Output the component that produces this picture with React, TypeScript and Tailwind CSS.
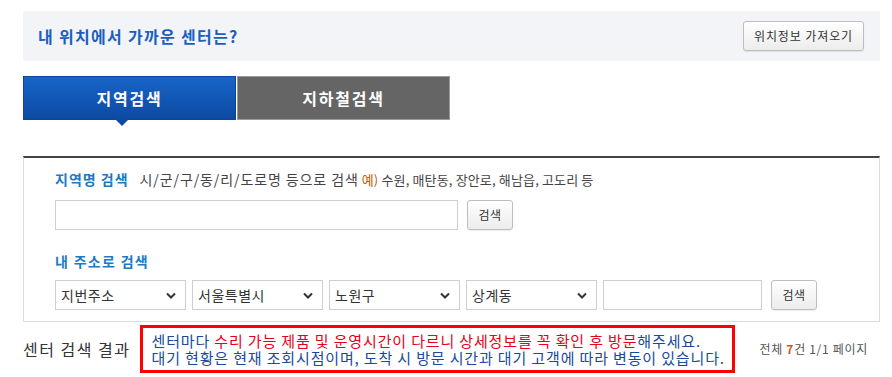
import React from "react";

function Chevron() {
  return (
    <svg width="10" height="7" viewBox="0 0 10 7" className="shrink-0">
      <polyline points="1,1.5 5,5.5 9,1.5" fill="none" stroke="#333" strokeWidth="2" />
    </svg>
  );
}

function FakeSelect({ label }: { label: string }) {
  return (
    <div className="flex h-[30px] w-[131px] items-center justify-between border border-[#cfcfcf] bg-white pl-[5px] pr-[9px] text-[14px] leading-[20px] tracking-[0.5px] text-[#333]">
      <span>{label}</span>
      <Chevron />
    </div>
  );
}

function GrayButton({ children, className }: { children: React.ReactNode; className?: string }) {
  return (
    <button
      className={
        "flex h-[30px] items-center justify-center rounded-[3px] border border-[#bdbdbd] bg-gradient-to-b from-white to-[#ececec] text-[12px] leading-[16px] text-[#333] shadow-[0_1px_1px_rgba(0,0,0,0.08)] " +
        (className ?? "")
      }
    >
      {children}
    </button>
  );
}

export default function App() {
  return (
    <div className="h-[377px] w-[892px] overflow-hidden bg-white pl-[23px] pr-[12px] font-['Noto_Sans_CJK_KR','Noto_Sans',sans-serif] text-[#333]">
      {/* top location box */}
      <div className="mt-[11px] flex h-[50px] items-center justify-between bg-[#f3f4f8] pl-[15px] pr-[16px]">
        <span className="text-[16px] font-bold leading-[22px] tracking-[1.3px] text-[#1a5fbf]">내 위치에서 가까운 센터는?</span>
        <GrayButton className="w-[121px] tracking-[0.9px]">위치정보 가져오기</GrayButton>
      </div>

      {/* tabs */}
      <div className="mt-[15px] flex h-[44px]">
        <div className="relative flex w-[213px] items-center justify-center border border-[#0b4699] bg-gradient-to-b from-[#1765c9] to-[#0d4aa2] text-[16px] font-bold leading-[22px] tracking-[1.8px] text-white">
          지역검색
          <div className="absolute left-[91px] top-full h-0 w-0 border-l-[7px] border-r-[7px] border-t-[7px] border-l-transparent border-r-transparent border-t-[#0d4aa2]" />
        </div>
        <div className="ml-px flex w-[213px] items-center justify-center border border-[#9a9a9a] bg-[#656565] text-[16px] font-bold leading-[22px] tracking-[1.8px] text-white">
          지하철검색
        </div>
      </div>

      {/* search panel */}
      <div className="mt-[36px] border-x border-b border-t-2 border-x-[#dcdcdc] border-b-[#dcdcdc] border-t-[#444] pb-[11px] pl-[31px] pt-[11px]">
        <div className="flex items-baseline leading-[20px]">
          <span className="text-[14px] font-bold tracking-[1px] text-[#1b7ac6]">지역명 검색</span>
          <span className="ml-[11px] text-[14px] tracking-[0.9px] text-[#444]">시/군/구/동/리/도로명 등으로 검색</span>
          <span className="ml-[3px] text-[13px] tracking-[0.15px] text-[#444]">
            <span className="text-[#b85c00]">예)</span> 수원, 매탄동, 장안로, 해남읍, 고도리 등
          </span>
        </div>
        <div className="mt-[10px] flex items-center">
          <input className="h-[30px] w-[403px] border border-[#cfcfcf] bg-white outline-none" />
          <GrayButton className="ml-[9px] w-[46px] tracking-[0.5px]">검색</GrayButton>
        </div>
        <div className="mt-[21px] text-[14px] font-bold leading-[20px] tracking-[1.3px] text-[#1b7ac6]">내 주소로 검색</div>
        <div className="mt-[9px] flex items-center gap-[6px]">
          <FakeSelect label="지번주소" />
          <FakeSelect label="서울특별시" />
          <FakeSelect label="노원구" />
          <FakeSelect label="상계동" />
          <input className="h-[30px] w-[159px] border border-[#cfcfcf] bg-white outline-none" />
          <GrayButton className="ml-[3px] w-[46px] tracking-[0.5px]">검색</GrayButton>
        </div>
      </div>

      {/* result row */}
      <div className="mt-[3px] flex items-center pr-[12px]">
        <span className="text-[16px] leading-[22px] tracking-[1.5px] text-[#333]">센터 검색 결과</span>
        <div className="ml-[9px] border-[3px] border-[#ff0000] py-[4px] pl-[9px] pr-[7px] text-[15px] leading-[17px] tracking-[0.85px] text-[#1a4a9a]">
          <div>
            센터마다 <span className="text-[#e6001a]">수리 가능 제품 및 운영시간이 다르니 상세정보를 꼭 확인 후 방문</span>해주세요.
          </div>
          <div>대기 현황은 현재 조회시점이며, 도착 시 방문 시간과 대기 고객에 따라 변동이 있습니다.</div>
        </div>
        <span className="ml-auto text-[12px] leading-[16px] tracking-[0.7px] text-[#555]">
          전체 <span className="font-bold text-[#c8591a]">7</span>건 1/1 페이지
        </span>
      </div>
    </div>
  );
}
